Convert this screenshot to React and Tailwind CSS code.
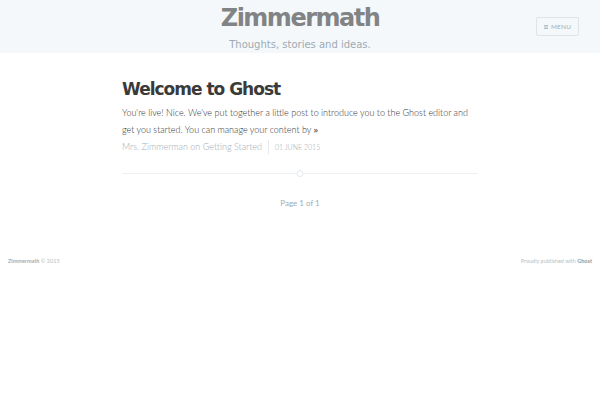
export default function App() {
  return (
    <div className="min-h-[400px] bg-white font-['DejaVu_Sans',sans-serif]">
      <header className="relative h-[53px] bg-[#f4f8fb] flex flex-col items-center">
        <h1 className="mt-[3px] text-[24px] leading-[30px] font-bold tracking-[-1.5px] text-[#818385]">Zimmermath</h1>
        <p className="mt-[5px] text-[10px] leading-[14px] text-[#9eabb3]">Thoughts, stories and ideas.</p>
        <button className="absolute right-[21px] top-[17px] h-[19px] w-[43px] border border-[#dfe4e8] rounded-[2px] flex items-center justify-center gap-[3px] font-['Lato',sans-serif] text-[6.5px] text-[#a3afb6] tracking-wide">
          <svg width="4" height="4" viewBox="0 0 4 4" className="text-[#b4bfc5]">
            <rect x="0" y="0" width="4" height="1" fill="currentColor" />
            <rect x="0" y="1.5" width="4" height="1" fill="currentColor" />
            <rect x="0" y="3" width="4" height="1" fill="currentColor" />
          </svg>
          MENU
        </button>
      </header>

      <main className="w-[356px] mx-auto">
        <article className="pt-[26px]">
          <h2 className="text-[17px] leading-[20px] font-bold tracking-[-1px] text-[#3a3a3a]">Welcome to Ghost</h2>
          <p className="mt-[5px] font-['Lato',sans-serif] font-light text-[9px] leading-[17px] text-[#333333]">
            You're live! Nice. We've put together a little post to introduce you to the Ghost editor and get you started. You can manage your content by <span className="font-['Open_Sans',sans-serif] font-normal">»</span>
          </p>
          <div className="mt-[2px] h-[14px] flex items-center font-['Lato',sans-serif] font-light text-[#9eabb3]">
            <span className="text-[9px]">Mrs. Zimmerman on Getting Started</span>
            <span className="mx-[6px] w-px h-[14px] bg-[#e5eaed]"></span>
            <span className="text-[7px] uppercase">01 June 2015</span>
          </div>
        </article>
        <div className="mt-[19px] relative h-px bg-[#eef1f3]">
          <span className="absolute left-1/2 -translate-x-1/2 -top-[3px] w-[7px] h-[7px] rounded-full border border-[#e5eaed] bg-white"></span>
        </div>
        <p className="mt-[23px] leading-[12px] text-center font-['Lato',sans-serif] text-[8px] text-[#9eabb3]">Page 1 of 1</p>
      </main>

      <footer className="mt-[47px] px-[8px] h-[10px] flex items-center justify-between font-['Lato',sans-serif] text-[5.5px] text-[#b4bfc5]">
        <span><span className="font-bold text-[#a3afb6]">Zimmermath</span> © 2015</span>
        <span>Proudly published with <span className="font-bold text-[#8d9aa2]">Ghost</span></span>
      </footer>
    </div>
  );
}
